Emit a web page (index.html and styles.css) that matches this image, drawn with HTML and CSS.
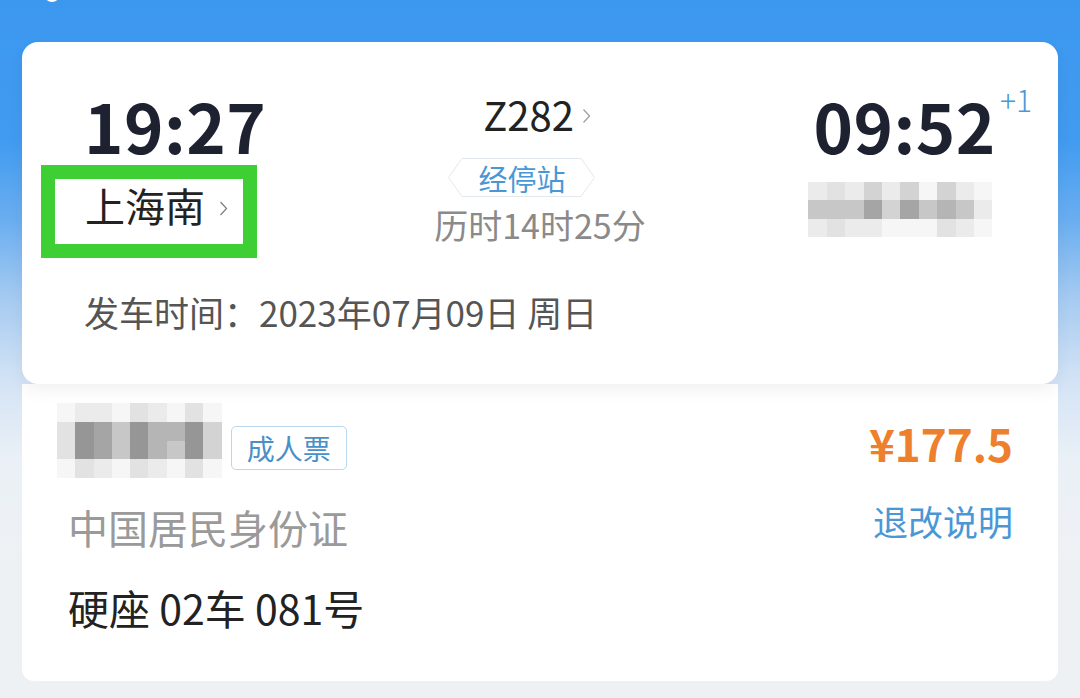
FILE: index.html
```html
<!DOCTYPE html>
<html lang="zh-CN">
<head>
  <meta charset="UTF-8">
  <meta name="viewport" content="width=device-width, initial-scale=1.0">
  <title>订单详情</title>
  <link rel="stylesheet" href="styles.css">
</head>
<body>

  <div class="topbar">
    <span class="status-dot"></span>
  </div>

  <!-- Train info -->
  <div class="trip-card">
    <div class="trip-row">
      <div class="trip-side">
        <div class="time">19:27</div>
        <div class="station station-marked">
          上海南
          <svg class="chev" viewBox="0 0 9 16"><path d="M1.5 1.5l6 6.5-6 6.5" fill="none" stroke="#808080" stroke-width="1.3"/></svg>
        </div>
      </div>

      <div class="trip-middle">
        <div class="train-no">
          Z282
          <svg class="chev" viewBox="0 0 9 16"><path d="M1.5 1.5l6 6.5-6 6.5" fill="none" stroke="#a0a0a0" stroke-width="1.3"/></svg>
        </div>
        <div class="stops-tag">
          <svg class="tag-shape" viewBox="0 0 147 39" preserveAspectRatio="none">
            <polygon points="14,0.5 133,0.5 146.5,19.5 133,38.5 14,38.5 0.5,19.5" fill="#fff" stroke="#e3e8ee" stroke-width="1"/>
          </svg>
          <span>经停站</span>
        </div>
        <div class="duration">历时14时25分</div>
      </div>

      <div class="trip-side trip-arrive">
        <div class="time-wrap">
          <div class="time">09:52</div>
          <span class="plus-day">+1</span>
        </div>
        <div class="mosaic mosaic-station">
          <i class="b"></i><i class="c"></i><i class="b"></i><i class="d"></i><i class="b"></i><i class="d"></i><i class="a"></i><i class="d"></i><i class="b"></i><i class="a"></i>
          <i class="e"></i><i class="e"></i><i class="e"></i><i class="g"></i><i class="d"></i><i class="g"></i><i class="e"></i><i class="f"></i><i class="e"></i><i class="b"></i>
          <i class="b"></i><i class="c"></i><i class="b"></i><i class="b"></i><i class="a"></i><i class="a"></i><i class="a"></i><i class="c"></i><i class="b"></i><i class="a"></i>
        </div>
      </div>
    </div>

    <div class="depart-date">发车时间：2023年07月09日 周日</div>
  </div>

  <!-- Passenger -->
  <div class="passenger-card">
    <div class="pass-row first">
      <div class="pass-left">
        <div class="mosaic mosaic-name">
          <i class="a"></i><i class="b"></i><i class="b"></i><i class="a"></i><i class="c"></i><i class="b"></i><i class="a"></i><i class="c"></i><i class="a"></i>
          <i class="c"></i><i class="h"></i><i class="g"></i><i class="e"></i><i class="h"></i><i class="f"></i><i class="f"></i><i class="h"></i><i class="d"></i>
          <i class="c"></i><i class="h"></i><i class="g"></i><i class="e"></i><i class="h"></i><i class="f"></i><i class="e"></i><i class="h"></i><i class="d"></i>
          <i class="a"></i><i class="c"></i><i class="b"></i><i class="a"></i><i class="c"></i><i class="b"></i><i class="a"></i><i class="c"></i><i class="a"></i>
        </div>
        <span class="ticket-type">成人票</span>
      </div>
      <div class="price">¥177.5</div>
    </div>

    <div class="pass-row second">
      <div class="id-type">中国居民身份证</div>
      <a class="refund-link" href="#">退改说明</a>
    </div>

    <div class="seat">硬座 02车 081号</div>
  </div>

</body>
</html>
```

FILE: styles.css
```css
body {
  font-family: "Noto Sans CJK SC", "Noto Sans", sans-serif;
  margin: 0;
  min-height: 698px;
  background: linear-gradient(180deg, #3c97ef 0, #419bf0 140px, #6aaef0 220px, #a6cbf1 300px, #d3e3f5 380px, #eaf0f6 460px, #eef1f4 560px);
  color: #222;
}

.topbar {
  height: 42px;
  overflow: hidden;
}

.status-dot {
  display: block;
  width: 16px;
  height: 16px;
  margin: -14px 0 0 44px;
  border-radius: 50%;
  background-color: white;
}

.trip-card {
  position: relative;
  z-index: 1;
  margin: 0 22px;
  padding: 49px 0 55px;
  background-color: white;
  border-radius: 16px;
  box-shadow: 0 8px 16px rgba(0, 0, 0, 0.05);
}

.trip-row {
  display: grid;
  grid-template-columns: 1fr auto 1fr;
}

.trip-side {
  padding-left: 62px;
}

.trip-arrive {
  justify-self: end;
  padding-left: 0;
  padding-right: 26px;
}

.time {
  font-size: 67px;
  line-height: 1;
  font-weight: 700;
  color: #1d2130;
  letter-spacing: 0.5px;
}

.station {
  display: inline-flex;
  align-items: center;
  font-size: 40px;
  line-height: 40px;
  color: #222;
}

.station-marked {
  margin: 7px 0 0 -43px;
  padding: 6px 15px 19px 30px;
  border: 14px solid #3ecf35;
}

.chev {
  width: 9px;
  height: 17px;
  margin-left: 14px;
}

.station .chev {
  margin-top: 6px;
}

.trip-middle {
  display: flex;
  flex-direction: column;
  align-items: center;
}

.train-no {
  display: flex;
  align-items: center;
  margin: 3px 0 0 -6px;
  font-size: 40px;
  line-height: 1;
  color: #222;
}

.train-no .chev {
  margin: 4px 0 0 8px;
  width: 9px;
  height: 16px;
}

.stops-tag {
  position: relative;
  width: 147px;
  height: 39px;
  margin: 24px 36px 0 0;
  display: flex;
  align-items: center;
  justify-content: center;
  font-size: 29px;
  color: #4a97d6;
}

.tag-shape {
  position: absolute;
  left: 0;
  top: 0;
  width: 100%;
  height: 100%;
}

.stops-tag span {
  position: relative;
  line-height: 1;
  margin-top: 2px;
}

.duration {
  margin-top: 11px;
  font-size: 34px;
  line-height: 1;
  color: #8a8a8a;
}

.time-wrap {
  display: flex;
  align-items: flex-start;
}

.plus-day {
  margin: -7px 0 0 4px;
  font-size: 30px;
  line-height: 1;
  font-weight: 300;
  color: #4a97d6;
}

.mosaic {
  display: grid;
}

.mosaic i {
  display: block;
}

.mosaic-station {
  margin: 24px 0 0 -5px;
  grid-template-columns: repeat(10, 18.4px);
  grid-auto-rows: 18.3px;
}

.mosaic-name {
  grid-template-columns: repeat(9, 18.3px);
  grid-auto-rows: 18.75px;
}

.mosaic .a { background-color: #f6f6f6; }
.mosaic .b { background-color: #ebebeb; }
.mosaic .c { background-color: #e2e2e2; }
.mosaic .d { background-color: #d3d3d3; }
.mosaic .e { background-color: #c7c7c7; }
.mosaic .f { background-color: #b5b5b5; }
.mosaic .g { background-color: #a5a5a5; }
.mosaic .h { background-color: #969696; }

.depart-date {
  margin: 36px 0 0 62px;
  font-size: 35px;
  line-height: 1;
  color: #555;
}

/* passenger part */
.passenger-card {
  margin: 0 22px;
  padding: 19px 45px 53px 46px;
  background-color: white;
  border-radius: 0 0 12px 12px;
}

.pass-row {
  display: flex;
  justify-content: space-between;
}

.pass-row.first {
  align-items: flex-start;
}

.pass-left {
  display: flex;
  align-items: flex-start;
  margin-left: -11px;
}

.ticket-type {
  margin: 23px 0 0 9px;
  padding: 0 15px;
  height: 42px;
  line-height: 42px;
  border: 1px solid #b9d8ee;
  border-radius: 5px;
  font-size: 28px;
  color: #4a90c8;
}

.price {
  margin-top: 18px;
  font-size: 44px;
  line-height: 1;
  font-weight: 700;
  color: #ee7f2d;
}

.pass-row.second {
  margin-top: 25px;
  align-items: flex-start;
}

.id-type {
  margin-top: 4px;
  font-size: 40px;
  line-height: 1;
  color: #9a9a9a;
}

.refund-link {
  font-size: 35px;
  line-height: 1;
  color: #4a97d6;
  text-decoration: none;
}

.seat {
  margin-top: 40px;
  font-size: 41px;
  line-height: 1;
  color: #222;
}
```
